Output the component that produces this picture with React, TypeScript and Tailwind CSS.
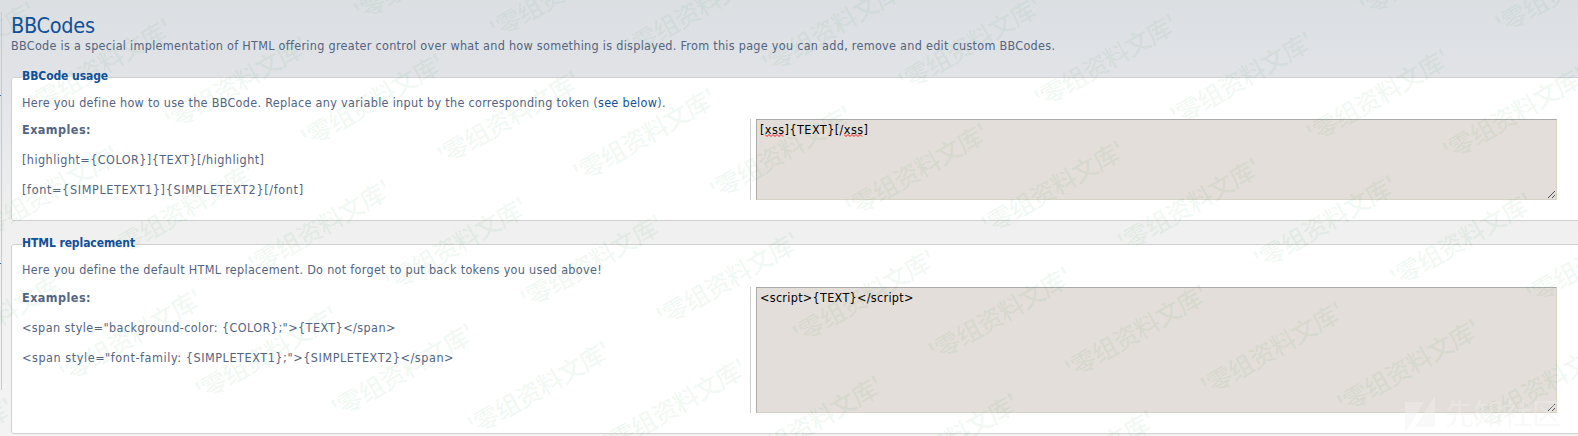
import type { ReactNode } from 'react';

const marks: { x: number; y: number }[] = [];
for (let j = -3; j <= 4; j++) {
  for (let i = -3; i <= 14; i++) {
    const x = 167.5 + 136.1 * i - 52.8 * j;
    const y = 123.5 + 17.4 * i + 126.4 * j;
    if (x > -150 && x < 1580 && y > -5 && y < 500) marks.push({ x, y });
  }
}

function Watermark() {
  return (
    <svg className="pointer-events-none absolute inset-0" width="1578" height="436" aria-hidden="true">
      <g className="font-['Noto_Sans_CJK_SC',sans-serif] text-[25px] font-medium" fill="#2f9a45" fillOpacity="0.082">
        {marks.map((m) => (
          <text key={`${m.x},${m.y}`} transform={`translate(${m.x} ${m.y}) rotate(-30)`} x="0" y="9" textLength="160">
            '零组资料文库'
          </text>
        ))}
      </g>
      <g fill="#f0f0f0" fillOpacity="0.4">
        <path d="M1405 402H1424L1405 433ZM1435 396V427H1415Z" />
        <text x="1445" y="425" textLength="116" className="font-['Noto_Sans_CJK_SC',sans-serif] text-[29px]">
          先知社区
        </text>
      </g>
    </svg>
  );
}

const gripDots = [
  [0, 6],
  [1, 5],
  [2, 4],
  [3, 3],
  [4, 2],
  [5, 1],
  [6, 0],
  [4, 6],
  [5, 5],
  [6, 4],
];

function Grip() {
  return (
    <svg className="absolute right-[1px] bottom-[1px]" width="7" height="7" fill="#505050" shapeRendering="crispEdges">
      {gripDots.map(([x, y]) => (
        <rect key={`${x},${y}`} x={x} y={y} width="1" height="1" />
      ))}
    </svg>
  );
}

function Misspelt({ children }: { children: string }) {
  return (
    <span className="relative inline-block">
      {children}
      <svg className="absolute bottom-[1px] left-0" width="19" height="3">
        <path d="M0 .5L2 2.5L4 .5L6 2.5L8 .5L10 2.5L12 .5L14 2.5L16 .5L18 2.5" fill="none" stroke="#f00" strokeWidth="0.9" />
      </svg>
    </span>
  );
}

type SectionProps = {
  title: string;
  intro: ReactNode;
  samples: ReactNode;
  value: ReactNode;
  boxClass: string;
  rowClass: string;
  className: string;
};

function Section({ title, intro, samples, value, boxClass, rowClass, className }: SectionProps) {
  return (
    <fieldset className={`w-[1600px] rounded-[3px] border border-[#d0d0d0] bg-white pl-[10px] ${className}`}>
      <legend className="h-[19px] text-[12px] font-bold leading-[17px] tracking-[-0.08px] text-[#115098]">{title}</legend>
      {intro}
      <div className={`flex ${rowClass}`}>
        <div className="w-[728px] pt-[3px]">
          <p className="font-bold tracking-[0.45px]">Examples:</p>
          {samples}
        </div>
        <div className={`flex border-l border-[#ccc] pl-[5px] ${boxClass}`}>
          <div className="relative w-[801px] border border-t-[#aaa] border-r-[#d5d3c6] border-b-[#d5d3c6] border-l-[#aaa] bg-[#e3ded9] pt-[2px] pl-[3px] text-black">
            {value}
            <Grip />
          </div>
        </div>
      </div>
    </fieldset>
  );
}

export default function App() {
  return (
    <div className="relative flex h-[436px] w-[1578px] overflow-hidden whitespace-nowrap bg-[linear-gradient(#dbdfe2_0px,#e1e3e7_77px,#f0f0f0_225px,#f3f3f3_436px)] font-['DejaVu_Sans_Condensed','DejaVu_Sans',sans-serif] text-[12.5px] leading-[16px] text-[#536482] [font-stretch:condensed]">
      <div className="mt-[12px] flex h-[378px] w-[2px] shrink-0 flex-col border-r border-[#c6cacd]">
        <i className="mt-[83px] h-px w-px bg-[#39708f]" />
        <i className="mt-[167px] h-px w-px bg-[#39708f]" />
      </div>
      <div className="ml-[9px] shrink-0">
        <h1 className="mt-[12px] h-[26px] text-[21.5px] leading-[28px] tracking-[-0.3px] text-[#115098]">BBCodes</h1>
        <p className="tracking-[0.285px]">
          BBCode is a special implementation of HTML offering greater control over what and how something is displayed. From this page you can
          add, remove and edit custom BBCodes.
        </p>
        <Section
          title="BBCode usage"
          className="mt-[14px] h-[153px]"
          rowClass="mt-[8px]"
          boxClass="h-[81px]"
          intro={
            <p className="mt-[8px] tracking-[0.3px]">
              Here you define how to use the BBCode. Replace any variable input by the corresponding token (
              <a className="text-[#115098]">see below</a>).
            </p>
          }
          samples={
            <>
              <p className="mt-[14px] tracking-[0.45px]">[highlight=&#123;COLOR&#125;]&#123;TEXT&#125;[/highlight]</p>
              <p className="mt-[14px] tracking-[0.65px]">[font=&#123;SIMPLETEXT1&#125;]&#123;SIMPLETEXT2&#125;[/font]</p>
            </>
          }
          value={
            <p className="tracking-[0.45px]">
              [<Misspelt>xss</Misspelt>]&#123;TEXT&#125;[/<Misspelt>xss</Misspelt>]
            </p>
          }
        />
        <Section
          title="HTML replacement"
          className="mt-[14px] h-[199px]"
          rowClass="mt-[9px]"
          boxClass="h-[126px]"
          intro={<p className="mt-[8px] tracking-[0.3px]">Here you define the default HTML replacement. Do not forget to put back tokens you used above!</p>}
          samples={
            <>
              <p className="mt-[14px] tracking-[0.42px]">{'<span style="background-color: {COLOR};">{TEXT}</span>'}</p>
              <p className="mt-[14px] tracking-[0.56px]">{'<span style="font-family: {SIMPLETEXT1};">{SIMPLETEXT2}</span>'}</p>
            </>
          }
          value={<p className="tracking-[0.3px]">{'<script>{TEXT}</script>'}</p>}
        />
      </div>
      <Watermark />
    </div>
  );
}
